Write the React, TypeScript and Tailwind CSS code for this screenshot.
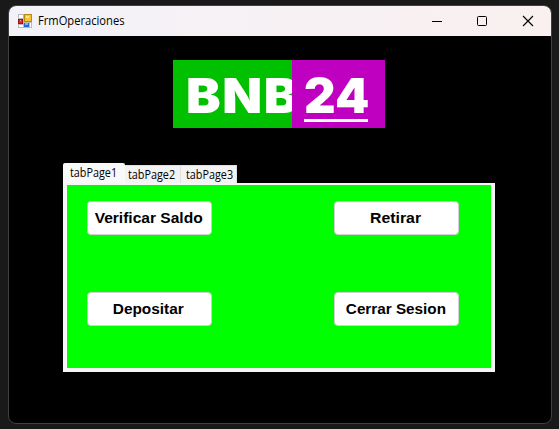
import React from 'react';

const tabs = [
  { name: 'tabPage1', className: 'h-5 w-[62px] rounded-t-[2px] bg-[#f9f9f9] pl-[7px] pt-px' },
  { name: 'tabPage2', className: 'h-[18px] w-14 border-r border-t border-[#e0e0e0] bg-[#f3f3f3] pl-[3px]' },
  { name: 'tabPage3', className: 'h-[18px] w-14 border-r border-t border-[#e0e0e0] bg-[#f3f3f3] pl-[5px]' },
];

const actions = [
  { label: 'Verificar Saldo', className: 'scale-x-[1.11]' },
  { label: 'Retirar', className: 'scale-x-[1.13]' },
  { label: 'Depositar', className: 'scale-x-[1.1]' },
  { label: 'Cerrar Sesion', className: 'scale-x-[1.09]' },
];

function FormIcon() {
  return (
    <svg width="14" height="14" viewBox="0 0 14 14" shapeRendering="crispEdges" className="shrink-0">
      <rect width="14" height="14" fill="#b9b9bd" />
      <rect x="1" y="1" width="4" height="3" fill="#fff" />
      <rect x="1" y="11" width="4" height="2" fill="#fff" />
      <rect x="12" y="9" width="1" height="4" fill="#fff" />
      <rect x="6" y="0" width="8" height="8" fill="#b98a10" />
      <rect x="7" y="1" width="6" height="6" fill="#f5c52c" />
      <rect x="8" y="2" width="3" height="2" fill="#ffe58a" />
      <rect x="0" y="5" width="5" height="5" fill="#a40f0f" />
      <rect x="1" y="6" width="3" height="3" fill="#cf3329" />
      <rect x="2" y="6" width="1" height="1" fill="#f3a08d" />
      <rect x="6" y="9" width="5" height="4" fill="#2e66c8" />
      <rect x="7" y="9" width="3" height="2" fill="#79adf5" />
    </svg>
  );
}

function TitleBar() {
  return (
    <header className="flex h-[30px] shrink-0 items-center bg-linear-to-r from-[#f2f2f9] via-[#f7f1f4] to-[#f9f0ef] pl-[9px] text-black">
      <FormIcon />
      <span className="ml-1.5 w-[87px] origin-left scale-x-[0.93] whitespace-nowrap font-['Open_Sans',sans-serif] text-[12px] leading-4">
        FrmOperaciones
      </span>
      <div className="ml-auto flex pr-[17px]">
        <svg width="102" height="12" viewBox="0 0 102 12" fill="none" stroke="#000" className="block">
          <path d="M0 6.5H10" />
          <rect x="45.5" y="1.5" width="9" height="9" rx="1" />
          <path d="M91 1L101 11M101 1L91 11" strokeWidth="1.1" />
        </svg>
      </div>
    </header>
  );
}

function Logo() {
  return (
    <div className="ml-[164px] flex h-[68px] w-[212px] font-['Inter',sans-serif] text-[48px] font-black leading-[68px] text-white">
      <div className="w-[119px] overflow-hidden bg-[#00c000] pl-[13px]">
        <span className="inline-block origin-left scale-x-[1.08] pt-[2px] tracking-[1.5px]">BNB</span>
      </div>
      <div className="w-[93px] bg-[#c000c0] pl-3">
        <div className="mt-[2px] h-[60px] w-16 border-b-[3px] border-white">
          <span className="inline-block origin-left scale-x-[1.02]">24</span>
        </div>
      </div>
    </div>
  );
}

function Tabs() {
  return (
    <div className="ml-[54px] mt-[35px] w-[432px]">
      <div className="flex h-5 items-end font-['Open_Sans',sans-serif] text-[12px] leading-[17px] text-black">
        {tabs.map(({ name, className }) => (
          <div key={name} className={className}>
            <span className="inline-block origin-left scale-x-[0.9]">{name}</span>
          </div>
        ))}
      </div>
      <div className="h-[189px] border-x-4 border-b-4 border-t-2 border-[#f5f5f5] bg-[#00ff00] pl-5 pt-4">
        <div className="grid grid-cols-[125px_125px] gap-x-[122px] gap-y-[57px]">
          {actions.map(({ label, className }) => (
            <button
              key={label}
              className="flex h-[34px] items-center justify-center whitespace-nowrap rounded-[4px] border border-[#d0d0d0] bg-white pr-[2px] font-['Liberation_Sans',Arial,sans-serif] text-[14px] font-bold text-black"
            >
              <span className={className}>{label}</span>
            </button>
          ))}
        </div>
      </div>
    </div>
  );
}

export default function App() {
  return (
    <div className="h-[429px] w-[559px] overflow-hidden bg-[#191919] pl-2 pt-[5px]">
      <main className="flex h-[419px] w-[544px] flex-col overflow-hidden rounded-lg border border-[#404040] bg-black">
        <TitleBar />
        <div className="pt-6">
          <Logo />
          <Tabs />
        </div>
      </main>
    </div>
  );
}
